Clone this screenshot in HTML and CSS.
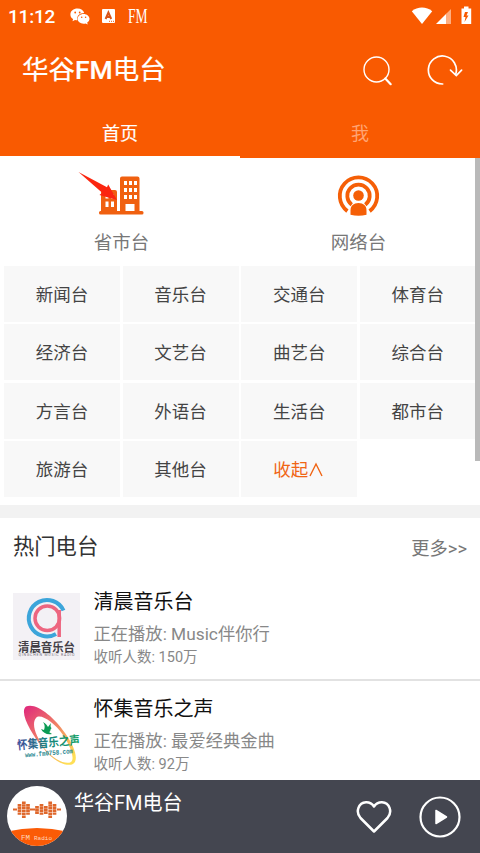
FILE: index.html
```html
<!DOCTYPE html>
<html lang="zh-CN">
<head>
<meta charset="utf-8">
<title>华谷FM电台</title>
<link rel="stylesheet" href="styles.css">
</head>
<body>
<div class="app">
  <header class="header">
    <div class="status">
      <span class="clock">11:12</span>
      <svg class="wechat" width="20" height="17" viewBox="0 0 20 17">
        <path fill="#fff" d="M7.500.5C3.400.5.4 3 .4 6.400c0 2 1 3.600 2.700 4.700L2.500 13.200l2.500-1.300c.8.200 1.600.3 2.400.3C6.400 8.100 9.500 5 14.200 5 13.600 2.300 10.900.5 7.500.5z"/>
        <path fill="#fff" d="M13.600 5.900c-3.400 0-6 2.200-6 4.900s2.600 4.900 6 4.900c.7 0 1.400-.1 2-.3l2.100 1.100-.5-1.900c1.400-.9 2.300-2.300 2.300-3.800 0-2.700-2.600-4.900-5.900-4.900z"/>
        <g fill="#f95a01"><circle cx="5.200" cy="4.500" r=".9"/><circle cx="9.700" cy="4.500" r=".9"/><circle cx="11.700" cy="9.300" r=".8"/><circle cx="15.600" cy="9.300" r=".8"/></g>
      </svg>
      <svg class="input-badge" width="13" height="14" viewBox="0 0 13 14">
        <rect width="13" height="14" rx="1" fill="#fff"/>
        <path fill="none" stroke="#d9551a" stroke-width="2" d="M3.600 10 6.400 3.500l2.800 6.500M4.500 8h3.700"/>
        <path stroke="#e85b10" stroke-dasharray="1 1" d="M7 12.300h5"/>
      </svg>
      <span class="status-fm">FM</span>
      <svg class="signals" width="61" height="19" viewBox="0 0 61 19">
        <path fill="#fff" d="M.8 5.200C6.500.3 15.500.3 21.200 5.200L11 18z"/>
        <path fill="#fff" d="M25 18 35.500 7.500V18z"/>
        <path fill="#ffae80" d="M35.500 7.500 40 3v15h-4.500z"/>
        <path fill="#fff" d="M53 .5h4.500v2h2.700V18H50.500V2.500H53z"/>
        <path fill="#f95a01" d="m54 6-1.500 5h2l-1 5 4-6.500h-2L57 6z"/>
      </svg>
    </div>
    <div class="titlebar">
      <h1>华谷<b>FM</b>电台</h1>
      <svg class="actions" width="102" height="32" viewBox="0 0 102 32" fill="none" stroke="#fff">
        <circle cx="14.500" cy="14.500" r="12.500" stroke-width="1.400"/>
        <path d="m23.300 23.500 5.400 5.700" stroke-width="2.200" stroke-linecap="round"/>
        <path d="M80.700 29A14 14 0 1 1 93.800 19" stroke-width="1.700" stroke-linecap="round"/>
        <path d="m88.500 15.200 5.800 5.400 5.300-5.400" stroke-width="1.700" stroke-linecap="round"/>
      </svg>
    </div>
    <nav class="tabs"><span class="tab active">首页</span><span class="tab">我</span></nav>
  </header>
  <main class="content">
    <section class="entries">
      <div class="entry">
        <svg width="84" height="50" viewBox="0 0 84 50">
          <path fill="#f06010" d="M22 45V25q0-2 2-2h12q2 0 2 2v20zM41 45V11.500q0-2 2-2h15.500q2 0 2 2V45z"/>
          <rect x="20" y="44" width="44.500" height="3.500" rx="1.500" fill="#f06010"/>
          <path fill="#fff" d="M26.500 27h3v4.500h-3zm5.500 0h3v4.500h-3zm-5.500 7.500h3V40h-3zm5.500 0h3V40h-3zM45 14h3v4h-3zm5 0h3v4h-3zm5 0h3v4h-3zM45 21h3v4h-3zm5 0h3v4h-3zm5 0h3v4h-3zM45 28h3v4h-3zm5 0h3v4h-3zm5 0h3v4h-3zM46.500 37h9v7h-9z"/>
          <path fill="#fb2610" d="M-.5 5 28 20.200l1.200-2.800L38 33l-17.500-4.900 2.700-2.300z"/>
        </svg>
        <span>省市台</span>
      </div>
      <div class="entry">
        <svg width="84" height="50" viewBox="0 0 84 50">
          <g fill="none" stroke="#f55f07">
            <path stroke-width="3.800" d="M31.400 45.100A18.700 18.700 0 1 1 53.600 45.100"/>
            <path stroke-width="3.800" d="M35.700 38.800A11.200 11.200 0 1 1 49.300 38.800"/>
          </g>
          <circle cx="42.500" cy="29.500" r="5.300" fill="#f55f07"/>
          <path fill="#f55f07" d="M34.500 48.800V44.500c0-4.700 3-7.500 8-7.500s8 2.800 8 7.500v4.300q-8 2-16 0z"/>
        </svg>
        <span>网络台</span>
      </div>
    </section>
    <section class="grid">
      <span>新闻台</span><span>音乐台</span><span>交通台</span><span>体育台</span>
      <span>经济台</span><span>文艺台</span><span>曲艺台</span><span>综合台</span>
      <span>方言台</span><span>外语台</span><span>生活台</span><span>都市台</span>
      <span>旅游台</span><span>其他台</span><span class="collapse">收起<svg width="17" height="17" viewBox="0 0 17 17"><path d="M2 15 8 3l6 12" fill="none" stroke="#f06515" stroke-width="1.400"/></svg></span>
    </section>
    <div class="separator"></div>
    <div class="section-head"><h2>热门电台</h2><span class="more">更多&gt;&gt;</span></div>
    <article class="station">
      <svg class="cover" width="67" height="67" viewBox="0 0 67 67">
        <rect width="67" height="67" fill="#f3f1f5"/>
        <path fill="none" stroke="#3ca5da" stroke-width="4" d="M50.500 17.500A18.200 18.200 0 1 0 43 41"/>
        <circle cx="34.300" cy="25.200" r="12.300" fill="none" stroke="#ed6680" stroke-width="3.500"/>
        <path stroke="#ed6680" stroke-width="3.500" d="M46.200 17v27"/>
        <text class="cover-name" x="5" y="58.500" textLength="57" lengthAdjust="spacingAndGlyphs">清晨音乐台</text>
        <text class="cover-sub" x="5.500" y="63" textLength="56">QINGCHEN MUSIC RADIO</text>
      </svg>
      <div class="info"><h3>清晨音乐台</h3><p class="now">正在播放: Music伴你行</p><p class="count">收听人数: 150万</p></div>
    </article>
    <article class="station">
      <svg class="cover" width="67" height="67" viewBox="0 0 67 67">
        <defs>
          <linearGradient id="ring" x1="0" y1="0" x2=".8" y2="1"><stop offset="0" stop-color="#df257d"/><stop offset=".45" stop-color="#ee7867"/><stop offset="1" stop-color="#ffdf55"/></linearGradient>
          <linearGradient id="name"><stop offset="0" stop-color="#424b9b"/><stop offset=".5" stop-color="#17837d"/><stop offset="1" stop-color="#17a064"/></linearGradient>
        </defs>
        <path fill="url(#ring)" fill-rule="evenodd" d="M13 6.500C23 2 41 17 52 33c10 14 14 27 8 31-6 3-19-2-29-15C18 34 6 12 13 6.500zM23 18c-5 6 0 19 9 31 9 11 21 16 26 13 4-3 0-15-8-27C41 22 27 13 23 18z"/>
        <path fill="#0c9b54" d="M30 22c3 2 4 3 5 5l3-4c-1 4 0 5 1 5-2 0-1 4-3 4l3 2c-5 1-9-1-11-5l3 1c1-3 1-5-1-8z"/>
        <g transform="rotate(-5 33 43)">
          <text class="choir-name" x="4" y="47" textLength="63" lengthAdjust="spacingAndGlyphs">怀集音乐之声</text>
          <text class="choir-url" x="11" y="55.500" textLength="48" lengthAdjust="spacingAndGlyphs">www.fm0758.com</text>
        </g>
      </svg>
      <div class="info"><h3>怀集音乐之声</h3><p class="now">正在播放: 最爱经典金曲</p><p class="count">收听人数: 92万</p></div>
    </article>
    <div class="scrollbar"></div>
  </main>
  <footer class="player">
    <svg class="disc" width="60" height="60" viewBox="0 0 60 60">
      <defs><clipPath id="round"><circle cx="30" cy="30" r="30"/></clipPath></defs>
      <g clip-path="url(#round)">
        <rect width="60" height="60" fill="#fff"/>
        <path fill="#fb5b06" d="M0 45.500Q30 38.500 60 45.500V60H0z"/>
      </g>
      <g stroke="#df672b" stroke-width="3.700">
        <path stroke-dasharray="2.400 .4" d="M12.500 18v11M16.800 15.500v16.500M21 18v11M30 20v8M34.500 18v11M38.800 20v8M43.200 15.500v16.500M47.500 18v11"/>
        <path stroke-width="1.800" d="M6 23.500h4M23 23.500h5M50 23.500h4"/>
      </g>
      <text class="disc-fm" x="14" y="54">FM</text><text class="disc-radio" x="27" y="54">Radio</text>
    </svg>
    <strong>华谷FM电台</strong>
    <svg class="heart" width="36" height="34" viewBox="0 0 36 34"><path fill="none" stroke="#fff" stroke-width="2.500" stroke-linejoin="round" d="M18 31.500 4.500 18C-.8 12 2.500 2.500 10 2.200c4-.1 6.500 1.900 8 4.300 1.500-2.400 4-4.400 8-4.300 7.500.3 10.800 9.800 5.500 15.800z"/></svg>
    <svg class="play" width="42" height="42" viewBox="0 0 42 42"><circle cx="21" cy="21" r="19.500" fill="none" stroke="#fff" stroke-width="2.200"/><path fill="#fff" stroke="#fff" stroke-width="1.500" stroke-linejoin="round" d="M17 14.500v13L27.500 21z"/></svg>
  </footer>
</div>
</body>
</html>
```
FILE: styles.css
```css
* { box-sizing: border-box; margin: 0; padding: 0; }
body { width: 480px; height: 853px; overflow: hidden; background: #fff; font-family: Roboto, "Noto Sans CJK SC", sans-serif; }
svg { display: block; flex: none; }
.app { display: flex; flex-direction: column; height: 853px; }
.header { height: 158px; background: #f95a01; color: #fff; flex: none; }
.status { height: 32px; display: flex; align-items: flex-start; padding: 0 8px; }
.clock { width: 62px; font-size: 19px; line-height: 33px; font-weight: 500; letter-spacing: -.2px; }
.wechat { margin-top: 8px; }
.input-badge { margin: 9px 0 0 12px; }
.status-fm { margin-left: 13px; font: 20px/32px "Liberation Serif", serif; transform: scaleX(.68); transform-origin: left; }
.signals { margin: 6px 0 0 auto; }
.titlebar { height: 76px; display: flex; align-items: center; justify-content: space-between; padding: 0 16px 0 22px; }
.titlebar h1 { font-size: 26.500px; font-weight: 400; line-height: 40px; -webkit-text-stroke: .2px #fff; }
.titlebar b { font-weight: 500; }
.actions { margin-top: 1px; }
.tabs { height: 50px; display: flex; }
.tab { flex: 1; height: 50px; text-align: center; font-size: 18px; line-height: 51px; color: #ffa473; }
.tab.active { color: #fff; -webkit-text-stroke: .2px #fff; border-bottom: 2px solid #fff; }
.content { height: 622px; flex: none; position: relative; overflow: hidden; }
.entries { height: 108px; display: grid; grid-template-columns: 237px 237px; padding-left: 3px; }
.entry { display: flex; flex-direction: column; align-items: center; padding-top: 9px; font-size: 18.500px; color: #777; }
.entry svg { overflow: visible; margin-left: -2px; }
.entry:last-child svg { margin: -1px 0 1px -2px; }
.entry span { line-height: 28px; margin-top: 12px; }
.grid { height: 238.500px; display: grid; grid-template-columns: repeat(4, 116px); grid-auto-rows: 56px; gap: 2.300px 2.600px; padding-left: 4px; }
.grid span { display: flex; align-items: center; justify-content: center; background: #f8f8f8; color: #444; font-size: 17.500px; line-height: 26px; padding-top: 2px; }
.grid .collapse { color: #f06515; }
.separator { height: 13.500px; background: #f2f2f2; }
.section-head { height: 56px; display: flex; justify-content: space-between; align-items: center; padding: 2px 13px 0 13px; }
.section-head h2 { font-size: 21.300px; line-height: 30px; font-weight: 400; color: #333; }
.more { font-size: 18.300px; color: #777; }
.station { height: 107px; display: flex; padding: 19px 0 0 13px; border-bottom: 2px solid #e2e2e2; }
.station:nth-of-type(2) { border-bottom: 0; }
.info { margin-left: 13.500px; margin-top: -6px; }
.info h3 { font-size: 20px; line-height: 30px; font-weight: 400; color: #111; }
.now { font-size: 17.300px; line-height: 26px; margin-top: 4px; color: #888; }
.count { font-size: 14.500px; line-height: 22px; color: #888; }
.cover { overflow: visible; }
.cover-name { font-size: 12px; font-weight: 700; fill: #434047; }
.cover-sub { font-size: 3.500px; fill: #716b75; }
.choir-name { font-size: 12px; font-weight: 700; fill: url(#name); }
.choir-url { font: bold 7px "Liberation Mono", monospace; fill: #27868f; }
.scrollbar { position: absolute; right: 0; top: 0; width: 5px; height: 303px; background: #b9b9b9; }
.player { height: 73px; flex: none; display: flex; background: #444650; color: #fff; padding-left: 7px; }
.disc { margin-top: 6px; }
.disc-fm, .disc-radio { font: 7.500px "Liberation Mono", monospace; fill: #ffd7be; }
.disc-radio { font-size: 6px; }
.player strong { font-size: 20px; font-weight: 400; line-height: 30px; margin: 8px 0 0 7px; }
.heart { margin: 19.500px 27.500px 0 auto; }
.play { margin: 16px 19px 0 0; }
```
